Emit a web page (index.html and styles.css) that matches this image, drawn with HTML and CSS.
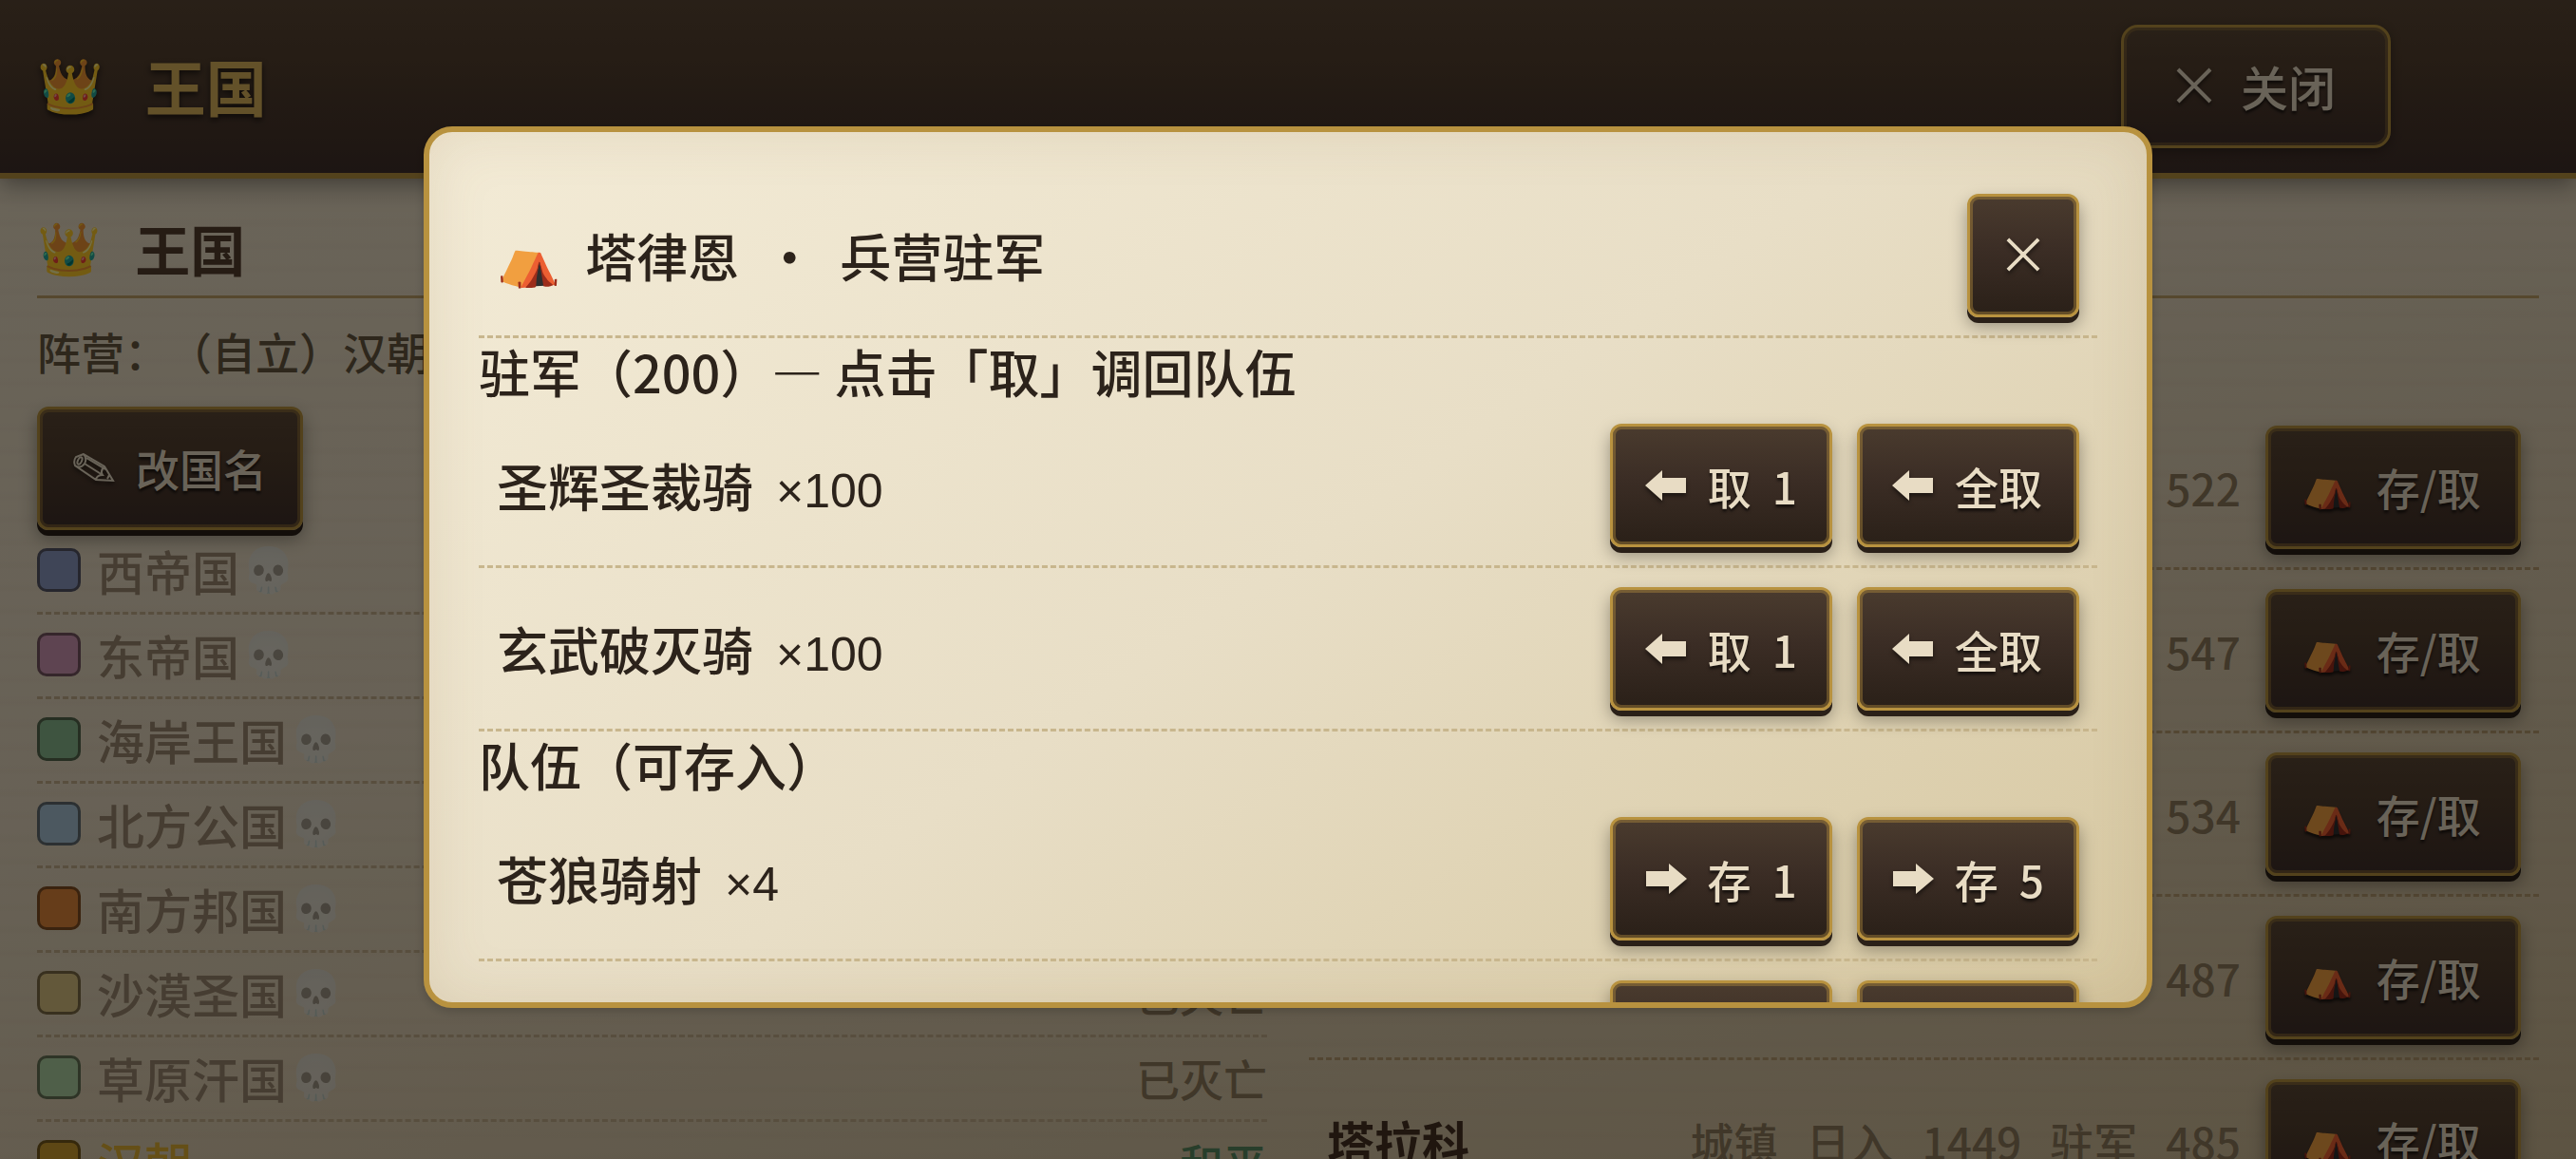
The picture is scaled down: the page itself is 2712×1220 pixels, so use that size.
FILE: index.html
```html
<!DOCTYPE html>
<html lang="zh-CN">
<head>
    <meta charset="UTF-8">
    <meta name="viewport" content="width=device-width, initial-scale=1">
    <title>王国</title>
    <link rel="stylesheet" href="styles.css">
</head>
<body>
    <svg class="defs" aria-hidden="true">
        <symbol id="arrow-left" viewBox="0 0 44 32"><path d="M0 16 18 0V8H43V24H18V32Z" fill="currentColor"/></symbol>
        <symbol id="arrow-right" viewBox="0 0 44 32"><path d="M44 16 25 0V8H1V24H25V32Z" fill="currentColor"/></symbol>
        <symbol id="cross" viewBox="0 0 38 38"><path d="M2 2 36 36M36 2 2 36" fill="none" stroke="currentColor" stroke-width="4"/></symbol>
        <symbol id="pencil" viewBox="0 0 44 32"><path d="M11 2 3 5Q0 9 2 14L24 29 42 30 33 15ZM11 2Q15 7 12 12Q8 18 2 14M14 6 34 18M12 12 31 24M33 15Q28 20 31 24Q25 24 24 29M36 28 38 24" fill="none" stroke="currentColor" stroke-width="2"/><ellipse cx="7" cy="9" rx="2" ry="4" transform="rotate(25 7 9)" fill="none" stroke="currentColor" stroke-width="2"/></symbol>
    </svg>

    <header class="top-bar">
        <h1><span class="emoji">👑</span>王国</h1>
        <button type="button" class="btn btn-close"><svg class="icon-cross"><use href="#cross"/></svg>关闭</button>
    </header>

    <main class="page">
        <h2><span class="emoji">👑</span>王国</h2>
        <p class="camp">阵营：（自立）汉朝</p>

        <div class="columns">
            <section>
                <button type="button" class="btn"><svg class="icon"><use href="#pencil"/></svg>改国名</button>
                <ul class="nations">
                    <li class="dead"><i class="swatch west"></i>西帝国<span class="emoji">💀</span></li>
                    <li class="dead"><i class="swatch east"></i>东帝国<span class="emoji">💀</span></li>
                    <li class="dead"><i class="swatch coast"></i>海岸王国<span class="emoji">💀</span></li>
                    <li class="dead"><i class="swatch north"></i>北方公国<span class="emoji">💀</span></li>
                    <li class="dead"><i class="swatch south"></i>南方邦国<span class="emoji">💀</span></li>
                    <li class="dead"><i class="swatch desert"></i>沙漠圣国<span class="emoji">💀</span><span class="state">已灭亡</span></li>
                    <li class="dead"><i class="swatch steppe"></i>草原汗国<span class="emoji">💀</span><span class="state">已灭亡</span></li>
                    <li class="own"><i class="swatch han"></i>汉朝<span class="state peace">和平</span></li>
                </ul>
            </section>

            <section>
                <ul class="towns">
                    <li><span class="info">522</span><button type="button" class="btn btn-camp"><span class="emoji">⛺</span>存/取</button></li>
                    <li><span class="info">547</span><button type="button" class="btn btn-camp"><span class="emoji">⛺</span>存/取</button></li>
                    <li><span class="info">534</span><button type="button" class="btn btn-camp"><span class="emoji">⛺</span>存/取</button></li>
                    <li><span class="info">487</span><button type="button" class="btn btn-camp"><span class="emoji">⛺</span>存/取</button></li>
                    <li><b>塔拉科</b><span class="info"><span>城镇</span><span>日入</span><span>1449</span><span>驻军</span><span>485</span></span><button type="button" class="btn btn-camp"><span class="emoji">⛺</span>存/取</button></li>
                </ul>
            </section>
        </div>
    </main>

    <div class="overlay">
        <div class="modal" role="dialog" aria-modal="true" aria-labelledby="modalTitle">
            <div class="row">
                <h3 id="modalTitle"><span class="emoji">⛺</span><span>塔律恩</span><span class="dot">·</span><span>兵营驻军</span></h3>
                <button type="button" class="btn btn-x" aria-label="关闭"><svg class="icon-x"><use href="#cross"/></svg></button>
            </div>

            <h4>驻军（200）— 点击「取」调回队伍</h4>
            <div class="row">
                <span class="troop">圣辉圣裁骑<span class="count">×100</span></span>
                <button type="button" class="btn btn-move"><svg class="icon"><use href="#arrow-left"/></svg>取<span>1</span></button>
                <button type="button" class="btn btn-move"><svg class="icon"><use href="#arrow-left"/></svg>全取</button>
            </div>
            <div class="row">
                <span class="troop">玄武破灭骑<span class="count">×100</span></span>
                <button type="button" class="btn btn-move"><svg class="icon"><use href="#arrow-left"/></svg>取<span>1</span></button>
                <button type="button" class="btn btn-move"><svg class="icon"><use href="#arrow-left"/></svg>全取</button>
            </div>

            <h4>队伍（可存入）</h4>
            <div class="row">
                <span class="troop">苍狼骑射<span class="count">×4</span></span>
                <button type="button" class="btn btn-move"><svg class="icon"><use href="#arrow-right"/></svg>存<span>1</span></button>
                <button type="button" class="btn btn-move"><svg class="icon"><use href="#arrow-right"/></svg>存<span>5</span></button>
            </div>
            <div class="row">
                <span class="troop"></span>
                <button type="button" class="btn btn-move"><svg class="icon"><use href="#arrow-right"/></svg></button>
                <button type="button" class="btn btn-move"><svg class="icon"><use href="#arrow-right"/></svg></button>
            </div>
        </div>
    </div>
</body>
</html>
```
FILE: styles.css
```css
* {
    box-sizing: border-box;
}
html, body {
    height: 100%;
}
body {
    margin: 0;
    overflow: hidden;
    color: #2c231b;
    background: repeating-linear-gradient(180deg, transparent 0, transparent 12px, rgba(120, 60, 40, 0.02) 20px, transparent 24px),
        linear-gradient(165deg, #ebdfc6 0%, #e6d8be 45%, #ceba94 100%);
    font-family: "Noto Sans CJK SC", sans-serif;
    font-size: 46px;
    font-weight: 500;
    text-spacing-trim: space-all;
}
h1, h2, h3, h4, p, ul {
    margin: 0;
    padding: 0;
}
ul {
    list-style: none;
}
.defs {
    display: none;
}
.emoji {
    font-family: "Noto Color Emoji", sans-serif;
    font-weight: 400;
}

/* buttons */
.btn {
    display: inline-flex;
    align-items: center;
    gap: 22px;
    height: 130px;
    padding: 0 35px 2px;
    border: 3px solid #b8923f;
    border-radius: 12px;
    background: linear-gradient(180deg, #4a3b2e 0%, #3b2d25 45%, #2a2018 100%);
    box-shadow: inset 0 0 0 3px rgba(184, 146, 63, 0.4), 0 6px 0 #2a2018, 0 9px 18px rgba(0, 0, 0, 0.35);
    color: #e8dcc4;
    font: inherit;
    line-height: 1;
    text-shadow: 0 3px 3px rgba(0, 0, 0, 0.6);
    white-space: nowrap;
    cursor: pointer;
}
.page .btn {
    background: linear-gradient(180deg, #5c4835 0%, #54402f 35%, #41302a 100%);
}
.icon {
    flex: none;
    width: 44px;
    height: 32px;
}
.icon, .icon-cross, .icon-x {
    filter: drop-shadow(0 3px 2px rgba(0, 0, 0, 0.5));
}

/* top bar */
.top-bar {
    position: relative;
    display: flex;
    align-items: center;
    justify-content: space-between;
    height: 188px;
    padding: 0 195px 0 39px;
    border-bottom: 6px solid #b8923f;
    background: linear-gradient(180deg, #5c4835 0%, #54402f 35%, #41302a 100%);
    box-shadow: 0 6px 24px rgba(0, 0, 0, 0.4);
}
h1 {
    display: flex;
    align-items: center;
    gap: 44px;
    padding-bottom: 4px;
    color: #dcb45c;
    font-size: 64px;
    line-height: 1;
    text-shadow: 0 3px 6px rgba(0, 0, 0, 0.6);
}
h1 .emoji {
    padding-top: 4px;
    font-size: 56px;
}
.btn-close {
    gap: 30px;
    padding: 0 55px 2px;
    border-radius: 18px;
    background: linear-gradient(180deg, #5c4835 0%, #54402f 35%, #41302a 100%);
    box-shadow: inset 0 0 0 3px rgba(184, 146, 63, 0.3), 0 3px 12px rgba(0, 0, 0, 0.3);
    font-size: 50px;
}
.icon-cross {
    width: 38px;
    height: 38px;
}

/* kingdom page */
.page {
    padding: 32px 39px;
}
h2 {
    display: flex;
    align-items: center;
    gap: 36px;
    height: 94px;
    padding-bottom: 10px;
    border-bottom: 3px solid #bfa066;
    color: #543e2e;
    font-size: 58px;
    line-height: 1;
}
h2 .emoji {
    padding-top: 4px;
    font-size: 54px;
}
.camp {
    height: 114px;
    padding-top: 20px;
    color: #66573f;
    line-height: 70px;
}
.columns {
    display: grid;
    grid-template-columns: 1fr 1fr;
    gap: 44px;
}
.nations li {
    display: flex;
    align-items: center;
    height: 89px;
    padding-bottom: 2px;
    border-bottom: 3px dashed #c3ad8a;
    font-size: 50px;
}
.nations .emoji {
    margin-left: 2px;
    font-size: 46px;
    opacity: 0.4;
}
.dead {
    color: #9c886f;
}
.own {
    color: #e0b033;
}
.swatch {
    width: 46px;
    height: 46px;
    margin-right: 17px;
    border: 3px solid rgba(30, 20, 10, 0.5);
    border-radius: 10px;
}
.west { background-color: #8c99c1; }
.east { background-color: #d197b4; }
.coast { background-color: #8abb8e; }
.north { background-color: #a9c4d5; }
.south { background-color: #e3883a; }
.desert { background-color: #dcc481; }
.steppe { background-color: #b0d3a2; }
.han { background-color: #cf9e2f; }
.state {
    margin-left: auto;
    color: #8e7a5b;
    font-size: 46px;
}
.peace {
    color: #5a8a60;
}
.towns li {
    display: flex;
    align-items: center;
    gap: 26px;
    height: 172px;
    padding: 0 19px;
    border-bottom: 3px dashed #b89c70;
}
.towns b {
    color: #473223;
    font-size: 50px;
}
.info {
    display: flex;
    gap: 30px;
    margin-left: auto;
    color: #8e7a5b;
}
.btn-camp {
    gap: 24px;
    min-width: 269px;
}
.btn-camp .emoji {
    font-size: 44px;
}

/* garrison dialog */
.overlay {
    position: fixed;
    inset: 0;
    display: flex;
    align-items: center;
    justify-content: center;
    padding-bottom: 26px;
    background: rgba(0, 0, 0, 0.55);
}
.modal {
    width: 90%;
    max-width: 1820px;
    height: 76vh;
    padding: 45px 52px;
    overflow: hidden;
    border: 6px solid #b8923f;
    border-radius: 30px;
    background: linear-gradient(145deg, #f3ebd6 0%, #e8dec6 50%, #d6c7a0 100%);
    box-shadow: inset 0 0 60px rgba(139, 105, 60, 0.15), 0 3px 12px rgba(0, 0, 0, 0.2);
}
.row {
    display: flex;
    align-items: center;
    gap: 26px;
    height: 172px;
    padding: 0 19px;
    border-bottom: 3px dashed #c8b68d;
}
h3, h4, .troop {
    font-size: 54px;
    font-weight: 500;
}
h3 {
    display: flex;
    align-items: center;
    flex: 1;
    gap: 26px;
}
h3 .emoji {
    padding-top: 10px;
    font-size: 54px;
}
.dot {
    width: 54px;
    text-align: center;
}
h4 {
    height: 70px;
    line-height: 70px;
}
.troop {
    display: flex;
    align-items: baseline;
    flex: 1;
    gap: 24px;
}
.count {
    font-family: "Liberation Sans", sans-serif;
    font-size: 50px;
    font-weight: 400;
}
.btn-x {
    justify-content: center;
    width: 118px;
}
.icon-x {
    width: 36px;
    height: 36px;
}
.btn-move {
    min-width: 234px;
    padding: 0 34px;
}
```
